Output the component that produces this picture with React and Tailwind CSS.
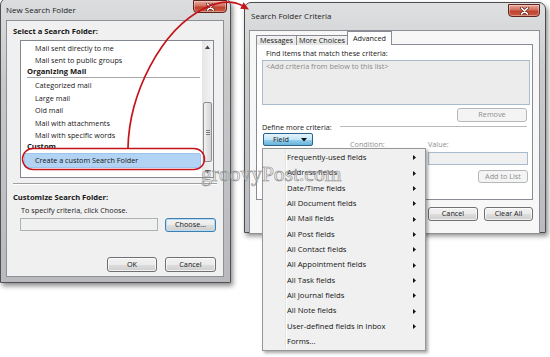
const menuItems = [
  'Frequently-used fields',
  'Address fields',
  'Date/Time fields',
  'All Document fields',
  'All Mail fields',
  'All Post fields',
  'All Contact fields',
  'All Appointment fields',
  'All Task fields',
  'All Journal fields',
  'All Note fields',
  'User-defined fields in Inbox',
  'Forms...',
]

const CloseButton = ({ className }) => (
  <div className={`flex items-center justify-center rounded-b-[4px] border border-[#5e2520] bg-[linear-gradient(#e9a899,#d0705f_45%,#c0412f_55%,#c95a3e)] shadow-[inset_0_0_0_1px_rgba(255,255,255,0.35)] ${className}`}>
    <svg width="9" height="8" viewBox="0 0 9 8">
      <path d="M1.5 1 L7.5 7 M7.5 1 L1.5 7" stroke="#5a2a24" strokeWidth="3" strokeLinecap="round" />
      <path d="M1.5 1 L7.5 7 M7.5 1 L1.5 7" stroke="#ffffff" strokeWidth="1.6" strokeLinecap="round" />
    </svg>
  </div>
)

const Btn = ({ children, className = '', disabled, focused }) => (
  <div
    className={`flex items-center justify-center rounded-[3px] border leading-none ${
      disabled
        ? 'border-[#b5b8bb] bg-[#f4f4f4] text-[#8e8e8e]'
        : focused
          ? 'border-[#3c7fb1] bg-[linear-gradient(#f2f2f2,#ebebeb_50%,#dddddd_51%,#cfcfcf)] shadow-[inset_0_0_0_1px_#b9dcf3]'
          : 'border-[#707070] bg-[linear-gradient(#f2f2f2,#ebebeb_50%,#dddddd_51%,#cfcfcf)] shadow-[inset_0_0_0_1px_rgba(255,255,255,0.7)]'
    } ${className}`}
  >
    {children}
  </div>
)

const Item = ({ children }) => <div className="h-[12.5px] pl-[14px] leading-[12.5px]">{children}</div>

const Heading = ({ children }) => (
  <div className="h-[9.5px] pl-[6px] text-[7.6px] font-bold leading-[9.5px]">{children}</div>
)

const ScrollArrow = ({ up }) => (
  <div className="flex h-[11px] items-center justify-center">
    <svg width="5" height="4" viewBox="0 0 5 4">
      <path d={up ? 'M0 4 L2.5 0.5 L5 4 Z' : 'M0 0 L2.5 3.5 L5 0 Z'} fill="#444" />
    </svg>
  </div>
)

const LeftWindow = () => (
  <div className="relative -mt-[2px] h-[285px] w-[231px] shrink-0 rounded-t-[7px] border border-[#505050] bg-[linear-gradient(#dcdddf,#c6c8ca_30%,#b8babd)] shadow-[2px_3px_5px_rgba(0,0,0,0.45)]">
    <div className="flex h-[22px] items-start justify-between pl-[5px] pr-[3px]">
      <span className="mt-[6px] text-[8px] leading-[10px] text-[#1c1c1c]">New Search Folder</span>
      <CloseButton className="mt-[1px] h-[13px] w-[34px]" />
    </div>
    <div className="ml-[6px] h-[255px] w-[216px] bg-[#f0f0f0] shadow-[0_0_0_1px_#8d9196]">
      <div className="pl-[6px] pt-[5px] text-[7.6px] font-bold leading-[10px]">Select a Search Folder:</div>
      <div className="ml-[13px] mt-[4px] flex h-[138px] w-[194px] border border-[#828790] bg-white">
        <div className="flex-1 pt-[0.5px]">
          <Item>Mail sent directly to me</Item>
          <Item>Mail sent to public groups</Item>
          <Heading>Organizing Mail</Heading>
          <div className="ml-[6px] mr-[2px] mt-[0.5px] h-[2px] border-t border-b border-t-[#a7a7a7] border-b-white" />
          <div className="mt-[0.5px]">
            <Item>Categorized mail</Item>
            <Item>Large mail</Item>
            <Item>Old mail</Item>
            <Item>Mail with attachments</Item>
            <Item>Mail with specific words</Item>
          </div>
          <Heading>Custom</Heading>
          <div className="ml-[3px] mr-[1px] mt-[1.5px] h-[15px] rounded-[2px] border border-[#9cc5ee] bg-[#b2d3f3] pl-[10px] leading-[13px]">
            Create a custom Search Folder
          </div>
        </div>
        <div className="flex w-[11px] flex-col bg-[linear-gradient(90deg,#e6e6e6,#f4f4f4)]">
          <ScrollArrow up />
          <div className="h-[50px]" />
          <div className="mx-[1px] flex h-[60px] flex-col items-center justify-center gap-[1px] rounded-[2px] border border-[#8e8f8f] bg-[linear-gradient(90deg,#f3f3f3,#e2e2e2_50%,#d4d4d4)]">
            <div className="h-px w-[4px] bg-[#7d7d7d]" />
            <div className="h-px w-[4px] bg-[#7d7d7d]" />
            <div className="h-px w-[4px] bg-[#7d7d7d]" />
          </div>
          <div className="flex-1" />
          <ScrollArrow />
        </div>
      </div>
      <div className="mx-[6px] mt-[5px] h-[2px] border-t border-b border-t-[#a0a0a0] border-b-white" />
      <div className="mt-[7px] pl-[6px] text-[7.6px] font-bold leading-[10px]">Customize Search Folder:</div>
      <div className="mt-[3px] pl-[14px] leading-[10px]">To specify criteria, click Choose.</div>
      <div className="mt-[3px] flex items-start pl-[13px]">
        <div className="h-[13px] w-[138px] border border-[#adb2b5] bg-[#f0f0f0]" />
        <Btn focused className="ml-[7px] h-[14px] w-[51px]">Choose...</Btn>
      </div>
      <div className="mt-[25px] flex justify-end gap-[8px] pr-[7px]">
        <Btn className="h-[15px] w-[50px]">OK</Btn>
        <Btn className="h-[15px] w-[51px]">Cancel</Btn>
      </div>
    </div>
  </div>
)

const Tab = ({ children, className }) => (
  <div className={`flex h-[10px] items-center justify-center border border-b-0 border-[#898c95] bg-[linear-gradient(#f3f3f3,#e5e5e5)] leading-none ${className}`}>
    {children}
  </div>
)

const SubmenuArrow = () => (
  <svg width="3" height="5" viewBox="0 0 3 5">
    <path d="M0 0 L3 2.5 L0 5 Z" fill="#111" />
  </svg>
)

const FieldMenu = () => (
  <div className="absolute left-[17px] top-[145px] z-20 w-[164px] border border-[#979797] bg-[#f0f0f0] py-[1px] shadow-[2px_2px_3px_rgba(0,0,0,0.35)]">
    <div className="absolute bottom-[1px] left-[22px] top-[1px] w-[2px] border-l border-r border-l-[#e2e3e3] border-r-white" />
    {menuItems.map((label, i) => (
      <div key={label} className="relative flex h-[15.35px] items-center justify-between pl-[24px] pr-[9px] text-[7.7px] font-medium text-[#141414]">
        <span>{label}</span>
        {i < menuItems.length - 1 && <SubmenuArrow />}
      </div>
    ))}
  </div>
)

const RightWindow = () => (
  <div className="relative ml-[13px] mt-[2px] h-[231px] w-[302px] shrink-0 rounded-t-[7px] border border-[#4d4d4d] bg-[linear-gradient(#dfe0e1,#c9cbcd_30%,#b9bbbe)] shadow-[2px_3px_5px_rgba(0,0,0,0.45)]">
    <div className="flex h-[21px] items-start justify-between pl-[6px] pr-[5px]">
      <span className="mt-[8px] text-[8px] leading-[10px] text-[#1c1c1c]">Search Folder Criteria</span>
      <CloseButton className="mt-[1px] h-[13px] w-[32px]" />
    </div>
    <div className="ml-[5px] h-[202px] w-[289px] bg-[#f7f7f7] shadow-[0_0_0_1px_#8d9196]">
      <div className="relative z-10 -mb-px ml-[6px] mt-[7px] flex h-[14px] items-end">
        <Tab className="w-[41px]">Messages</Tab>
        <Tab className="-ml-px w-[52px]">More Choices</Tab>
        <div className="-ml-px flex h-[14px] w-[45px] items-start justify-center border border-b-0 border-[#898c95] bg-white pt-[3px] leading-none">
          Advanced
        </div>
      </div>
      <div className="ml-[6px] flex h-[156px] w-[277px] flex-col border border-[#898c95] bg-white">
        <div className="mt-[3px] pl-[9px] leading-[10px]">Find items that match these criteria:</div>
        <div className="ml-[5px] mt-[2px] h-[45px] w-[268px] border border-[#a9bccf] bg-[#ececec] pl-[3px] leading-[10px] text-[#8a8a8a]">
          &lt;Add criteria from below to this list&gt;
        </div>
        <Btn disabled className="mr-[5px] mt-[3px] h-[14px] w-[70px] self-end">Remove</Btn>
        <div className="ml-[5px] mr-[5px] flex h-[10px] items-center">
          <span className="leading-[10px]">Define more criteria:</span>
          <div className="ml-[8px] h-[2px] flex-1 border-t border-b border-t-[#b9b9b9] border-b-white" />
        </div>
        <div className="ml-[6px] mt-[1px] flex items-start">
          <div className="flex h-[13px] w-[50px] items-center justify-between rounded-[2px] border border-[#2c628b] bg-[linear-gradient(#e5f4fc,#c4e5f6_50%,#98d1ef_51%,#68b3db)] pl-[9px] pr-[5px] leading-none">
            <span>Field</span>
            <svg width="6" height="4" viewBox="0 0 6 4">
              <path d="M0 0 L6 0 L3 3.5 Z" fill="#111" />
            </svg>
          </div>
          <div className="ml-[37px] mt-[6px] w-[78px] leading-[10px] text-[#8e8e8e]">Condition:</div>
          <div className="mt-[6px] flex w-[100px] flex-col">
            <div className="leading-[10px] text-[#8e8e8e]">Value:</div>
            <div className="mt-[3px] h-[13px] border border-[#a9bccf] bg-[#f0f0f0]" />
            <Btn disabled className="mt-[5px] h-[13px] w-[50px] self-end">Add to List</Btn>
          </div>
        </div>
      </div>
      <div className="mt-[7px] flex justify-end gap-[6px] pr-[6px]">
        <Btn className="h-[14px] w-[50px]">Cancel</Btn>
        <Btn className="h-[14px] w-[49px]">Clear All</Btn>
      </div>
    </div>
    <FieldMenu />
  </div>
)

export default function App() {
  return (
    <div className="relative h-[357px] w-[550px] overflow-hidden bg-white font-['Open_Sans',sans-serif] text-[7.25px] text-[#161616]">
      <div className="flex items-start">
        <LeftWindow />
        <RightWindow />
      </div>

      <svg className="pointer-events-none absolute inset-0 z-30" width="550" height="357" viewBox="0 0 550 357">
        <rect x="22.5" y="148.5" width="182" height="21" rx="10.5" fill="none" stroke="#c4141c" strokeWidth="1.5" />
        <path d="M128 148 C129 95 160 30 205 8 C220 1 233 1 242 5.5" fill="none" stroke="#c4141c" strokeWidth="1.7" />
        <path d="M249 9.5 L240.2 8.8 L243.6 2.2 Z" fill="#c4141c" />
      </svg>

      <div className="pointer-events-none absolute left-[201px] top-[161px] z-40 font-['Liberation_Serif',serif] text-[21.5px] leading-[26px] text-white/40 [-webkit-text-stroke:0.6px_#8a8a8a]">
        groovyPost.com
      </div>
    </div>
  )
}
